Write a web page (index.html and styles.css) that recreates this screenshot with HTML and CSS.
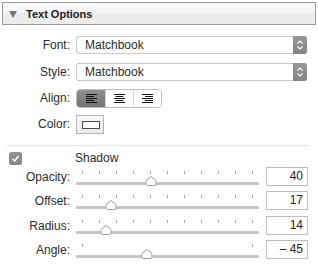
FILE: index.html
```html
<!DOCTYPE html>
<html lang="en">
<head>
  <meta charset="UTF-8" />
  <title>Text Options</title>
  <link rel="stylesheet" href="styles.css">
</head>
<body>
  <div class="panel">
    <div class="header">
      <svg class="disclosure" width="8" height="7" viewBox="0 0 8 7"><path d="M0 0 H8 L4 7 Z" fill="#767676"/></svg>
      <span>Text Options</span>
    </div>

    <div class="form">
      <div class="row">
        <div class="label">Font:</div>
        <div class="select">
          <span>Matchbook</span>
          <span class="stepper">
            <svg width="14" height="18" viewBox="0 0 14 18"><path d="M4.5 7.5 L7 5 L9.5 7.5 M4.5 10.5 L7 13 L9.5 10.5" fill="none" stroke="#fff" stroke-width="1.2"/></svg>
          </span>
        </div>
      </div>

      <div class="row">
        <div class="label">Style:</div>
        <div class="select">
          <span>Matchbook</span>
          <span class="stepper">
            <svg width="14" height="18" viewBox="0 0 14 18"><path d="M4.5 7.5 L7 5 L9.5 7.5 M4.5 10.5 L7 13 L9.5 10.5" fill="none" stroke="#fff" stroke-width="1.2"/></svg>
          </span>
        </div>
      </div>

      <div class="row row-short">
        <div class="label">Align:</div>
        <div class="segmented">
          <div class="segment active">
            <svg width="11" height="9" viewBox="0 0 11 9"><path d="M0 0.5 H11 M0 2.5 H8 M0 4.5 H11 M0 6.5 H8 M0 8.5 H11" stroke="#111" stroke-width="1"/></svg>
          </div>
          <div class="segment">
            <svg width="11" height="9" viewBox="0 0 11 9"><path d="M0 0.5 H11 M1.5 2.5 H9.5 M0 4.5 H11 M1.5 6.5 H9.5 M0 8.5 H11" stroke="#111" stroke-width="1"/></svg>
          </div>
          <div class="segment">
            <svg width="11" height="9" viewBox="0 0 11 9"><path d="M0 0.5 H11 M3 2.5 H11 M0 4.5 H11 M3 6.5 H11 M0 8.5 H11" stroke="#111" stroke-width="1"/></svg>
          </div>
        </div>
      </div>

      <div class="row row-short">
        <div class="label">Color:</div>
        <div class="well"><div class="swatch"></div></div>
      </div>

      <div class="separator"></div>

      <div class="shadow-row">
        <div class="label check-cell">
          <span class="checkbox">
            <svg width="13" height="13" viewBox="0 0 13 13"><path d="M3.5 6.8 L5.6 9 L9.6 4" fill="none" stroke="#fff" stroke-width="1.5"/></svg>
          </span>
        </div>
        <span class="shadow-text">Shadow</span>
      </div>

      <div class="slider-row">
        <div class="label">Opacity:</div>
        <div class="slider">
          <div class="ticks"><i></i><i></i><i></i><i></i><i></i><i></i><i></i><i></i><i></i><i></i><i></i></div>
          <div class="track"></div>
          <svg class="thumb" style="left: 41%" width="11" height="10" viewBox="0 0 11 10"><path d="M0.5 4.5 L5.5 0.5 L10.5 4.5 V8 Q10.5 9.5 9 9.5 H2 Q0.5 9.5 0.5 8 Z" fill="#fff" stroke="#9c9c9c"/></svg>
        </div>
        <div class="value">40</div>
      </div>

      <div class="slider-row">
        <div class="label">Offset:</div>
        <div class="slider">
          <div class="ticks"><i></i><i></i><i></i><i></i><i></i><i></i><i></i><i></i><i></i><i></i><i></i></div>
          <div class="track"></div>
          <svg class="thumb" style="left: 19%" width="11" height="10" viewBox="0 0 11 10"><path d="M0.5 4.5 L5.5 0.5 L10.5 4.5 V8 Q10.5 9.5 9 9.5 H2 Q0.5 9.5 0.5 8 Z" fill="#fff" stroke="#9c9c9c"/></svg>
        </div>
        <div class="value">17</div>
      </div>

      <div class="slider-row">
        <div class="label">Radius:</div>
        <div class="slider">
          <div class="ticks"><i></i><i></i><i></i><i></i><i></i><i></i><i></i><i></i><i></i><i></i><i></i></div>
          <div class="track"></div>
          <svg class="thumb" style="left: 16.4%" width="11" height="10" viewBox="0 0 11 10"><path d="M0.5 4.5 L5.5 0.5 L10.5 4.5 V8 Q10.5 9.5 9 9.5 H2 Q0.5 9.5 0.5 8 Z" fill="#fff" stroke="#9c9c9c"/></svg>
        </div>
        <div class="value">14</div>
      </div>

      <div class="slider-row">
        <div class="label">Angle:</div>
        <div class="slider">
          <div class="ticks"><i></i><i></i></div>
          <div class="track"></div>
          <svg class="thumb" style="left: 38.8%" width="11" height="10" viewBox="0 0 11 10"><path d="M0.5 4.5 L5.5 0.5 L10.5 4.5 V8 Q10.5 9.5 9 9.5 H2 Q0.5 9.5 0.5 8 Z" fill="#fff" stroke="#9c9c9c"/></svg>
        </div>
        <div class="value">– 45</div>
      </div>
    </div>
  </div>
</body>
</html>
```

FILE: styles.css
```css
* {
  margin: 0;
  padding: 0;
  box-sizing: border-box;
}
body {
  background: #fff;
  font-family: 'Liberation Sans', Arial, sans-serif;
  font-size: 12px;
  color: #2b2b2b;
}
.panel {
  width: 318px;
  padding-top: 2px;
}
.header {
  margin: 0 2px 0 2px;
  height: 23px;
  border: 1px solid #999;
  background: linear-gradient(#f7f7f7 0, #f7f7f7 50%, #ececec 50%, #ececec 100%);
  display: flex;
  align-items: center;
  padding-left: 6px;
  font-size: 11px;
  font-weight: bold;
  color: #1e1e1e;
}
.disclosure {
  margin-right: 9px;
  margin-top: 1px;
}
.form {
  padding-top: 6px;
}
.row {
  display: flex;
  align-items: center;
  height: 27px;
}
.row-short {
  height: 26px;
}
.label {
  width: 70px;
  text-align: right;
  margin-right: 6px;
  flex-shrink: 0;
}
.select {
  width: 231px;
  height: 18px;
  border: 1px solid #c8c8c8;
  border-right: none;
  border-radius: 3px;
  display: flex;
  align-items: center;
  justify-content: space-between;
  padding-left: 8px;
  background: #fff;
}
.stepper {
  width: 14px;
  height: 18px;
  margin-top: -1px;
  margin-bottom: -1px;
  background: linear-gradient(#979797, #858585);
  border-radius: 0 3px 3px 0;
  display: flex;
}
.segmented {
  display: flex;
  height: 19px;
  border: 1px solid #bdbdbd;
  border-radius: 4px;
  overflow: hidden;
}
.segment {
  width: 28px;
  display: flex;
  align-items: center;
  justify-content: center;
  background: #fff;
  border-left: 1px solid #d4d4d4;
}
.segment:first-child {
  border-left: none;
}
.segment.active {
  background: linear-gradient(#8f8f8f, #737373);
}
.well {
  width: 28px;
  height: 19px;
  border: 1px solid #b5b5b5;
  background: linear-gradient(#f8f8f8, #ececec);
  display: flex;
  align-items: center;
  padding-left: 5px;
}
.swatch {
  width: 18px;
  height: 8px;
  border: 1px solid #4a4a4a;
  background: #fff;
  margin-top: 1px;
}
.separator {
  margin: 8px 8px 0 7px;
  height: 1px;
  background: #e3e3e3;
}
.shadow-row {
  display: flex;
  height: 21px;
  padding-top: 6px;
}
.check-cell {
  text-align: left;
  padding-left: 9px;
}
.checkbox {
  display: block;
  width: 13px;
  height: 13px;
  border-radius: 2.5px;
  background: linear-gradient(#939393, #868686);
}
.checkbox svg {
  display: block;
}
.shadow-text {
  line-height: 13px;
  margin-left: -1px;
}
.slider-row {
  display: flex;
  align-items: flex-start;
  height: 24.33px;
}
.slider-row .label {
  line-height: 20px;
}
.slider {
  position: relative;
  width: 183px;
  height: 20px;
  margin-right: 7px;
}
.ticks {
  display: flex;
  justify-content: space-between;
  padding: 0 6px;
  margin-top: 4px;
  height: 3px;
}
.ticks i {
  width: 1px;
  height: 3px;
  background: #a8a8a8;
}
.track {
  margin-top: 8px;
  height: 3px;
  border-radius: 1.5px;
  background: #c6c6c6;
}
.thumb {
  position: absolute;
  top: 9px;
  transform: translateX(-50%);
}
.value {
  width: 42px;
  height: 19px;
  border: 1px solid #bdbdbd;
  text-align: right;
  padding-right: 4px;
  line-height: 17px;
  color: #222;
}
```
